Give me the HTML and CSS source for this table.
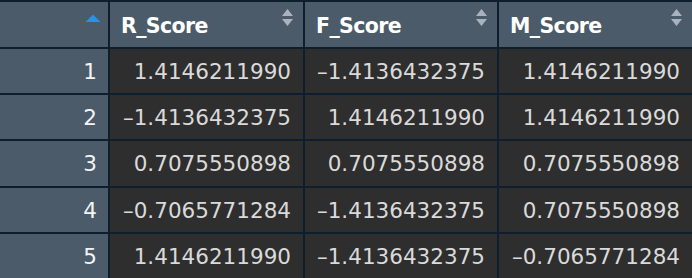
FILE: index.html
```html
<!DOCTYPE html>
<html>
<head>
<meta charset="utf-8">
<link rel="stylesheet" href="styles.css">
</head>
<body>
<div class="grid">
  <div class="hd hd-index">
    <svg class="sort-asc" width="16" height="8" viewBox="0 0 16 8"><path d="M8 0.5 L15.5 8 L0.5 8 Z" fill="#2d8fe8"/></svg>
  </div>
  <div class="hd"><span class="hd-label">R_Score</span><svg class="sort" width="11" height="17" viewBox="0 0 11 17"><path d="M5.5 0 L11 7 L0 7 Z M0 10 L11 10 L5.5 17 Z" fill="#aab3bd"/></svg></div>
  <div class="hd"><span class="hd-label">F_Score</span><svg class="sort" width="11" height="17" viewBox="0 0 11 17"><path d="M5.5 0 L11 7 L0 7 Z M0 10 L11 10 L5.5 17 Z" fill="#aab3bd"/></svg></div>
  <div class="hd"><span class="hd-label">M_Score</span><svg class="sort" width="11" height="17" viewBox="0 0 11 17"><path d="M5.5 0 L11 7 L0 7 Z M0 10 L11 10 L5.5 17 Z" fill="#aab3bd"/></svg></div>

  <div class="idx">1</div><div class="val">1.4146211990</div><div class="val">–1.4136432375</div><div class="val">1.4146211990</div>
  <div class="idx">2</div><div class="val">–1.4136432375</div><div class="val">1.4146211990</div><div class="val">1.4146211990</div>
  <div class="idx">3</div><div class="val">0.7075550898</div><div class="val">0.7075550898</div><div class="val">0.7075550898</div>
  <div class="idx">4</div><div class="val">–0.7065771284</div><div class="val">–1.4136432375</div><div class="val">0.7075550898</div>
  <div class="idx">5</div><div class="val">1.4146211990</div><div class="val">–1.4136432375</div><div class="val">–0.7065771284</div>
</div>
</body>
</html>
```

FILE: styles.css
```css
html, body {
  margin: 0;
  padding: 0;
  background: #0e1e2d;
  overflow: hidden;
}

.grid {
  display: grid;
  grid-template-columns: 108px 193px 192px 193px;
  grid-template-rows: 45px 44px 44px 45px 44px 44px;
  gap: 2px;
  padding-top: 2px;
  font-family: "DejaVu Sans", "Liberation Sans", sans-serif;
}

.hd {
  background: #4c5b69;
  display: flex;
  justify-content: space-between;
  align-items: center;
  padding: 0 10px 0 11px;
}

.hd-label {
  color: #ffffff;
  font-weight: bold;
  font-size: 20.5px;
  letter-spacing: -0.6px;
  padding-top: 3px;
}

.sort {
  align-self: flex-start;
  margin-top: 7px;
}

.hd-index {
  justify-content: flex-end;
  padding-right: 7px;
}

.sort-asc {
  align-self: flex-start;
  margin-top: 12px;
}

.idx {
  background: #4c5b69;
  color: #f4f4f4;
  font-size: 21.5px;
  display: flex;
  align-items: center;
  justify-content: flex-end;
  padding-right: 11px;
}

.val {
  background: #2e2e2e;
  color: #dadada;
  font-size: 21.5px;
  display: flex;
  align-items: center;
  justify-content: flex-end;
  padding-right: 12px;
}
```
